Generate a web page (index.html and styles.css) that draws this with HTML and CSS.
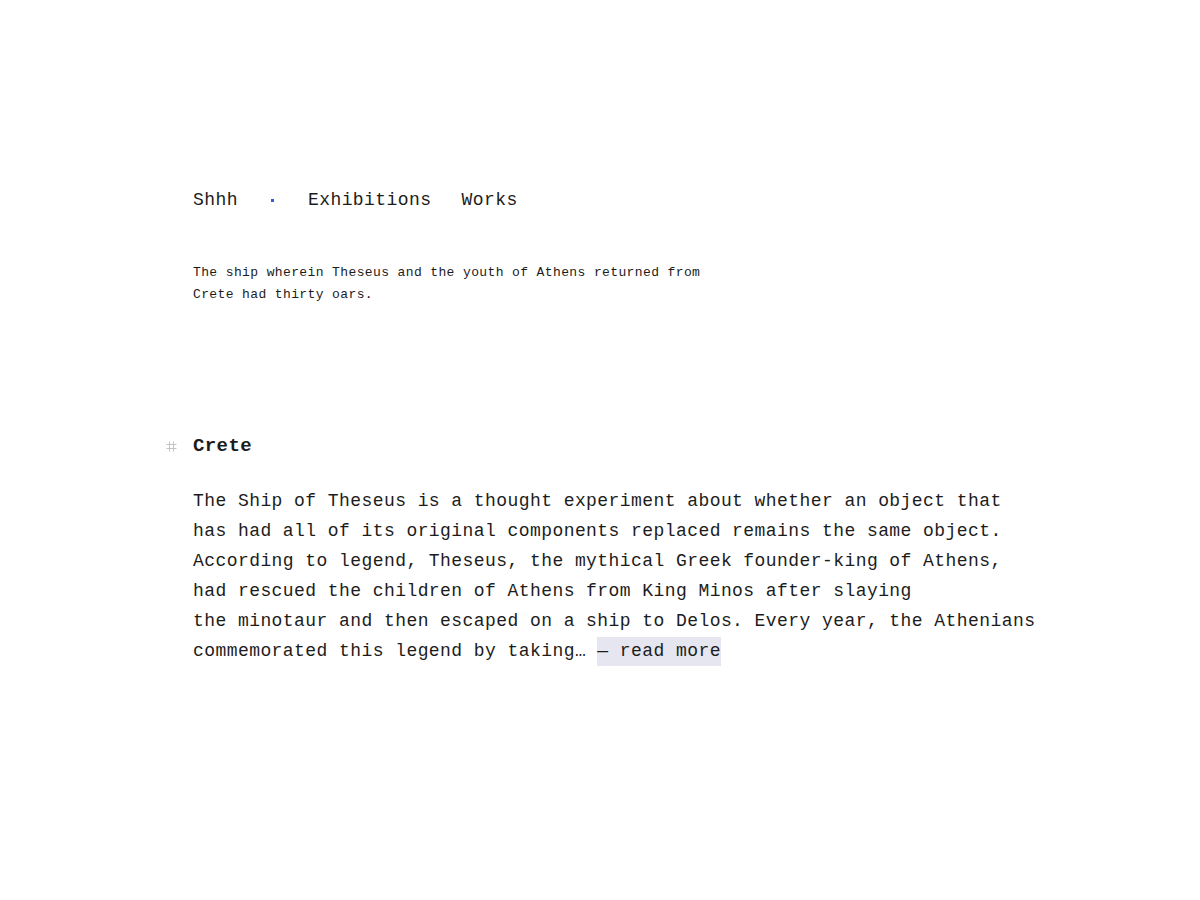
FILE: index.html
```html
<!DOCTYPE html>
<html lang="en">
<head>
<meta charset="utf-8">
<title>Shhh</title>
<link rel="stylesheet" href="styles.css">
</head>
<body>
<main class="page">
  <nav class="nav">
    <a class="nav-brand" href="#">Shhh</a>
    <span class="nav-dot"></span>
    <a class="nav-link" href="#">Exhibitions</a>
    <a class="nav-link nav-link--last" href="#">Works</a>
  </nav>
  <p class="intro">The ship wherein Theseus and the youth of Athens returned from<br>Crete had thirty oars.</p>
  <article class="post">
    <h2 class="post-title"><span class="hash" aria-hidden="true"><svg width="11" height="11" viewBox="0 0 11 11"><path d="M3.5 0.5V10.5M7.5 0.5V10.5M0.5 3.5H10.5M0.5 7.5H10.5" stroke="#c4c4c4" stroke-width="1" fill="none"/></svg></span>Crete</h2>
    <p class="post-body">The Ship of Theseus is a thought experiment about whether an object that<br>has had all of its original components replaced remains the same object.<br>According to legend, Theseus, the mythical Greek founder-king of Athens,<br>had rescued the children of Athens from King Minos after slaying<br>the minotaur and then escaped on a ship to Delos. Every year, the Athenians<br>commemorated this legend by taking… <a class="more" href="#">— read more</a></p>
  </article>
</main>
</body>
</html>
```
FILE: styles.css
```css
html, body {
  margin: 0;
  padding: 0;
  background: #ffffff;
}
body {
  font-family: "Liberation Mono", "DejaVu Sans Mono", monospace;
  color: #1c1c1c;
}
a {
  color: inherit;
  text-decoration: none;
}
.page {
  padding: 186px 0 0 193px;
}
.nav {
  display: flex;
  align-items: center;
  height: 28px;
  font-size: 18px;
  letter-spacing: 0.43px;
  line-height: 28px;
}
.nav-dot {
  width: 3px;
  height: 3px;
  background: #3a5bd9;
  margin: 0 34px 0 33px;
}
.nav-link--last {
  margin-left: 30px;
}
.intro {
  margin: 48px 0 0 0;
  font-size: 13px;
  letter-spacing: 0.38px;
  line-height: 22px;
}
.post {
  margin-top: 126px;
}
.post-title {
  display: flex;
  align-items: center;
  margin: 0;
  height: 28px;
  line-height: 28px;
  font-size: 19px;
  letter-spacing: 0.4px;
  font-weight: bold;
}
.hash {
  display: flex;
  align-items: center;
  width: 27px;
  margin-left: -27px;
}
.hash svg {
  display: block;
}
.post-body {
  margin: 26px 0 0 0;
  font-size: 18px;
  letter-spacing: 0.43px;
  line-height: 30px;
  white-space: nowrap;
}
.more {
  display: inline-block;
  line-height: 29px;
  background: #e5e6f0;
}
```
